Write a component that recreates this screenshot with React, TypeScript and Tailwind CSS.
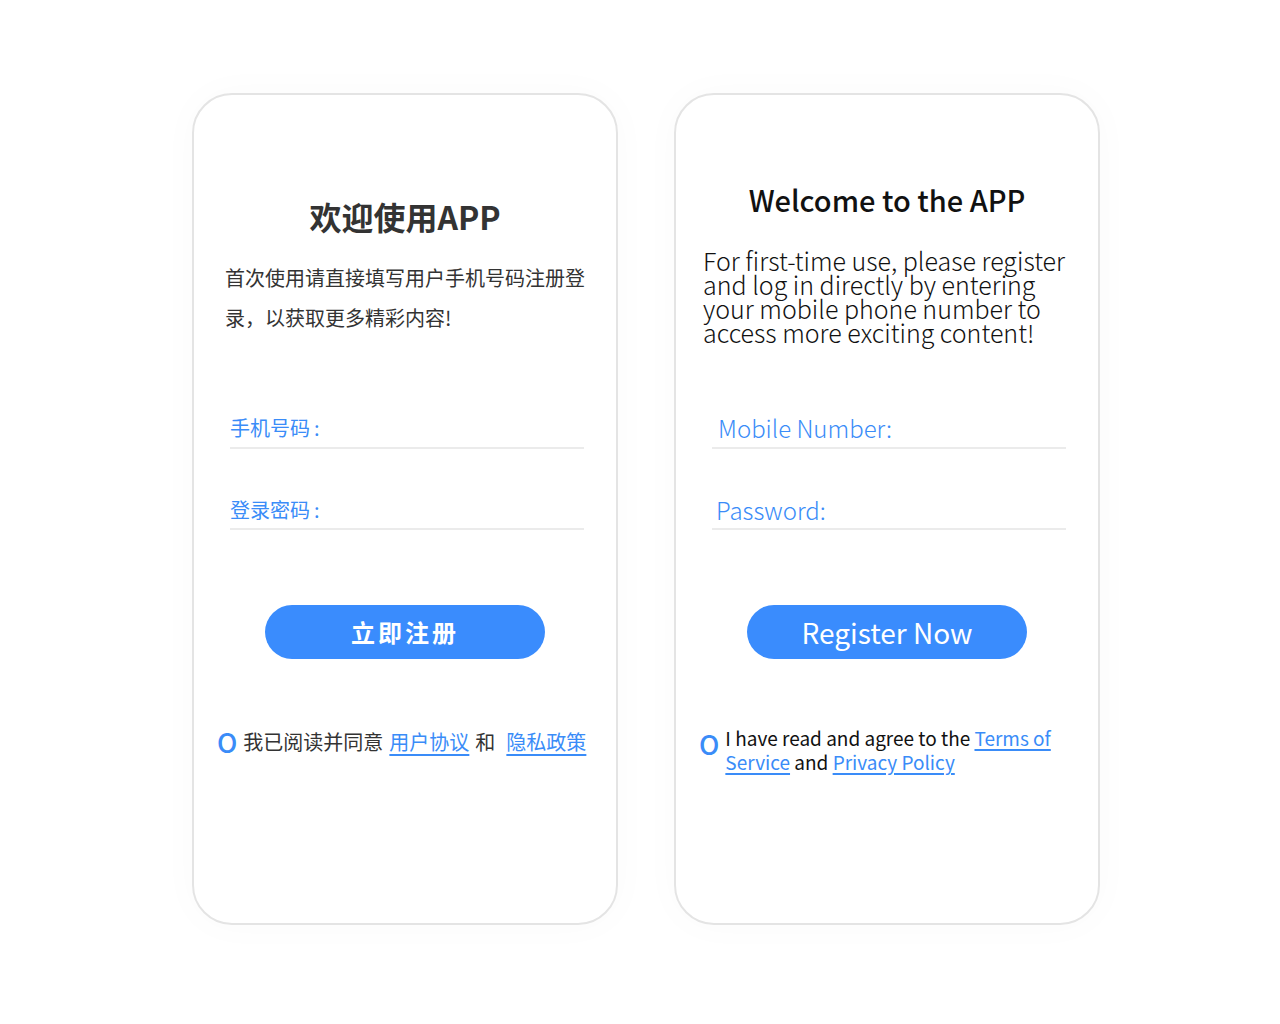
import React from "react";

const cjk = "font-['Noto_Sans_CJK_SC',sans-serif]";

function Field({ label, className, labelClass }: { label: React.ReactNode; className: string; labelClass: string }) {
  return (
    <div className={`ml-[36px] mr-[32px] border-b-2 border-[#ebebeb] ${className}`}>
      <div className={`h-[30px] leading-[30px] text-[#3a8cf8] ${labelClass}`}>{label}</div>
    </div>
  );
}

function Card({ children, className }: { children: React.ReactNode; className?: string }) {
  return (
    <div
      className={`w-[426px] h-[832px] shrink-0 bg-white border-2 border-[#e4e4e4] rounded-[40px] shadow-[0_0_40px_rgba(0,0,0,0.025)] flex flex-col ${cjk} ${className ?? ""}`}
    >
      {children}
    </div>
  );
}

function Ring() {
  return <span className="text-[#3a8cf8] text-[27px] font-medium leading-[30px]">O</span>;
}

function ChineseCard() {
  return (
    <Card className="pt-[101px] text-[#333333]">
      <h1 className="h-10 leading-10 text-center text-[32px] font-bold">欢迎使用APP</h1>
      <p className="mt-[22px] pl-[31px] pr-[26px] text-[20px] leading-10">
        首次使用请直接填写用户手机号码注册登录，以获取更多精彩内容!
      </p>
      <Field
        label={<>手机号码<span className="ml-[4px]">:</span></>}
        className="mt-[75px] pb-[4px]"
        labelClass="text-[20px]"
      />
      <Field
        label={<>登录密码<span className="ml-[4px]">:</span></>}
        className="mt-[46px] pb-[3px]"
        labelClass="text-[20px]"
      />
      <button className="mt-[75px] mx-auto w-[280px] h-[54px] rounded-full bg-[#3a8cfd] text-white text-[24px] font-bold tracking-[3px]">
        立即注册
      </button>
      <div className="mt-[68px] pl-[23px] flex items-center h-[30px] text-[20px]">
        <Ring />
        <span className="ml-[6px]">我已阅读并同意</span>
        <a className="ml-[6px] text-[#3a8cf8] underline underline-offset-[4px] decoration-[1.5px]">用户协议</a>
        <span className="ml-[6px]">和</span>
        <a className="ml-[11px] text-[#3a8cf8] underline underline-offset-[4px] decoration-[1.5px]">隐私政策</a>
      </div>
    </Card>
  );
}

function EnglishCard() {
  return (
    <Card className="pt-[84px] text-[#111111]">
      <h1 className="h-10 leading-10 text-center text-[29px] font-medium">Welcome to the APP</h1>
      <p className="mt-[29px] pl-[27px] pr-[20px] text-[25px] leading-[24px] font-light">
        For first-time use, please register and log in directly by entering your mobile phone number to access more exciting content!
      </p>
      <Field label="Mobile Number:" className="mt-[69px] pb-[4px]" labelClass="pl-[6px] text-[24px] font-light" />
      <Field label="Password:" className="mt-[46px] pb-[3px]" labelClass="pl-[4px] text-[24px] font-light" />
      <button className="mt-[75px] mx-auto w-[280px] h-[54px] rounded-full bg-[#3a8cfd] text-white text-[28px]">
        Register Now
      </button>
      <div className="mt-[67px] pl-[23px] pr-[30px] flex items-start text-[19px] leading-[24px]">
        <span className="mt-[3px]">
          <Ring />
        </span>
        <p className="ml-[6px]">
          I have read and agree to the{" "}
          <a className="text-[#3a8cf8] underline underline-offset-[3px] decoration-[1.5px]">Terms of Service</a> and{" "}
          <a className="text-[#3a8cf8] underline underline-offset-[3px] decoration-[1.5px]">Privacy Policy</a>
        </p>
      </div>
    </Card>
  );
}

export default function App() {
  return (
    <div className="w-[1280px] h-[1024px] bg-white pt-[93px] pl-[192px] flex gap-[56px]">
      <ChineseCard />
      <EnglishCard />
    </div>
  );
}
